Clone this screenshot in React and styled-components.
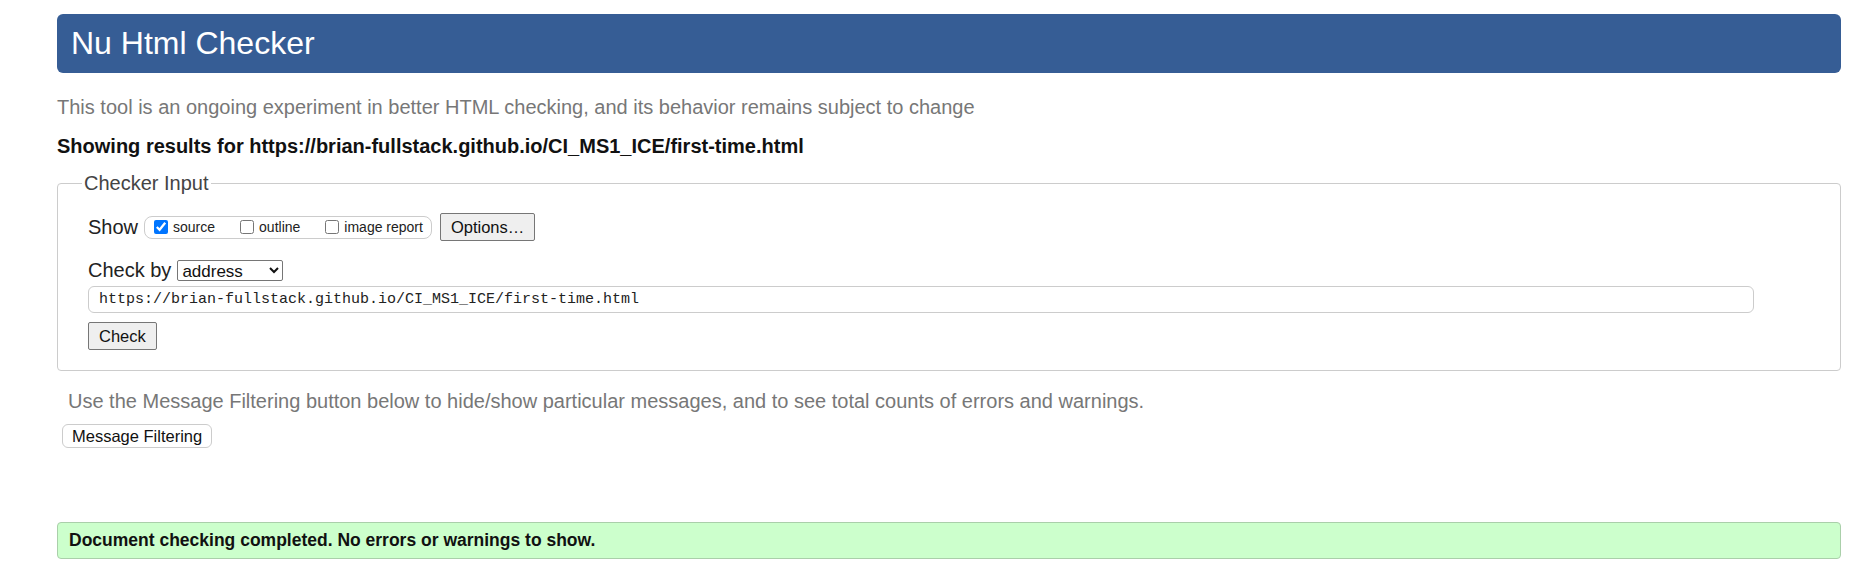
import { styled, createGlobalStyle } from "styled-components";

const Global = createGlobalStyle`
body{
  margin:0;
  background:#fff;
  font-family:"Liberation Sans", Arial, sans-serif;
}
`;

function App(){
    return(
        <Page>
            <Global/>
            <Header>Nu Html Checker</Header>
            <Intro>This tool is an ongoing experiment in better HTML checking, and its behavior remains subject to change</Intro>
            <Results>Showing results for https://brian-fullstack.github.io/CI_MS1_ICE/first-time.html</Results>

            <Fieldset>
                <Legend>Checker Input</Legend>
                <Row $top={14}>
                    <Label>Show</Label>
                    <CheckGroup>
                        <CheckItem><input type="checkbox" defaultChecked/>source</CheckItem>
                        <CheckItem><input type="checkbox"/>outline</CheckItem>
                        <CheckItem><input type="checkbox"/>image report</CheckItem>
                    </CheckGroup>
                    <Button>Options…</Button>
                </Row>
                <Row $top={18}>
                    <Label>Check by</Label>
                    <Select defaultValue="address">
                        <option value="address">address</option>
                        <option value="file">file upload</option>
                        <option value="text">text input</option>
                    </Select>
                </Row>
                <UrlInput defaultValue="https://brian-fullstack.github.io/CI_MS1_ICE/first-time.html"/>
                <Row $top={9}>
                    <Button>Check</Button>
                </Row>
            </Fieldset>

            <Hint>Use the Message Filtering button below to hide/show particular messages, and to see total counts of errors and warnings.</Hint>
            <PillButton>Message Filtering</PillButton>

            <Success>Document checking completed. No errors or warnings to show.</Success>
        </Page>
    )
}

const Page=styled.div`
padding:14px 25px 0 57px;
display:flex;
flex-direction:column;
align-items:flex-start;
`;

const Header=styled.h1`
margin:0;
width:100%;
box-sizing:border-box;
height:59px;
display:flex;
align-items:center;
padding:0 14px;
background-color:#365d95;
color:#fff;
border-radius:6px;
font-size:32px;
font-weight:400;
`;

const Intro=styled.p`
margin:23px 0 0;
font-size:20px;
line-height:23px;
color:#777;
`;

const Results=styled.p`
margin:16px 0 0;
font-size:20px;
line-height:23px;
font-weight:700;
color:#111;
`;

const Fieldset=styled.fieldset`
margin:14px 0 0;
width:100%;
box-sizing:border-box;
border:1px solid #ccc;
border-radius:4px;
padding:4px 30px 20px;
display:flex;
flex-direction:column;
align-items:flex-start;
`;

const Legend=styled.legend`
font-size:20px;
color:#444;
padding:0 2px;
margin-left:-6px;
`;

const Row=styled.div`
display:flex;
align-items:center;
gap:6px;
margin-top:${p=>p.$top}px;
`;

const Label=styled.span`
font-size:20px;
line-height:23px;
color:#222;
`;

const CheckGroup=styled.span`
display:inline-flex;
align-items:center;
gap:25px;
border:1px solid #ccc;
border-radius:8px;
height:23px;
box-sizing:border-box;
padding:0 8px 0 9px;
font-size:14px;
color:#222;
`;

const CheckItem=styled.label`
display:inline-flex;
align-items:center;
gap:5px;
input{margin:0;width:14px;height:14px;}
`;

const Button=styled.button`
font-family:"Liberation Sans", Arial, sans-serif;
font-size:16.5px;
color:#111;
background:#efefef;
border:1px solid #767676;
border-radius:2px;
height:28px;
padding:0 10px;
margin-left:2px;
&:first-child{margin-left:0;}
`;

const Select=styled.select`
font-family:"Liberation Sans", Arial, sans-serif;
font-size:17px;
height:21px;
width:106px;
border:1px solid #767676;
border-radius:2px;
background:#fff;
color:#111;
`;

const UrlInput=styled.input`
margin-top:4px;
width:1666px;
height:27px;
box-sizing:border-box;
border:1px solid #ccc;
border-radius:6px;
padding:0 10px;
font-family:"Liberation Mono", monospace;
font-size:15px;
color:#222;
`;

const Hint=styled.p`
margin:19px 0 0 11px;
font-size:20px;
line-height:23px;
color:#777;
`;

const PillButton=styled.button`
margin:11px 0 0 5px;
font-family:"Liberation Sans", Arial, sans-serif;
font-size:16.5px;
color:#111;
background:#fff;
border:1px solid #ccc;
border-radius:6px;
height:24px;
padding:0 9px;
`;

const Success=styled.div`
margin-top:74px;
width:100%;
box-sizing:border-box;
height:37px;
display:flex;
align-items:center;
padding:0 11px;
background:#ccffcc;
border:1px solid #aacfaa;
border-radius:4px;
font-size:17.5px;
font-weight:700;
color:#111;
`;

export default App;
